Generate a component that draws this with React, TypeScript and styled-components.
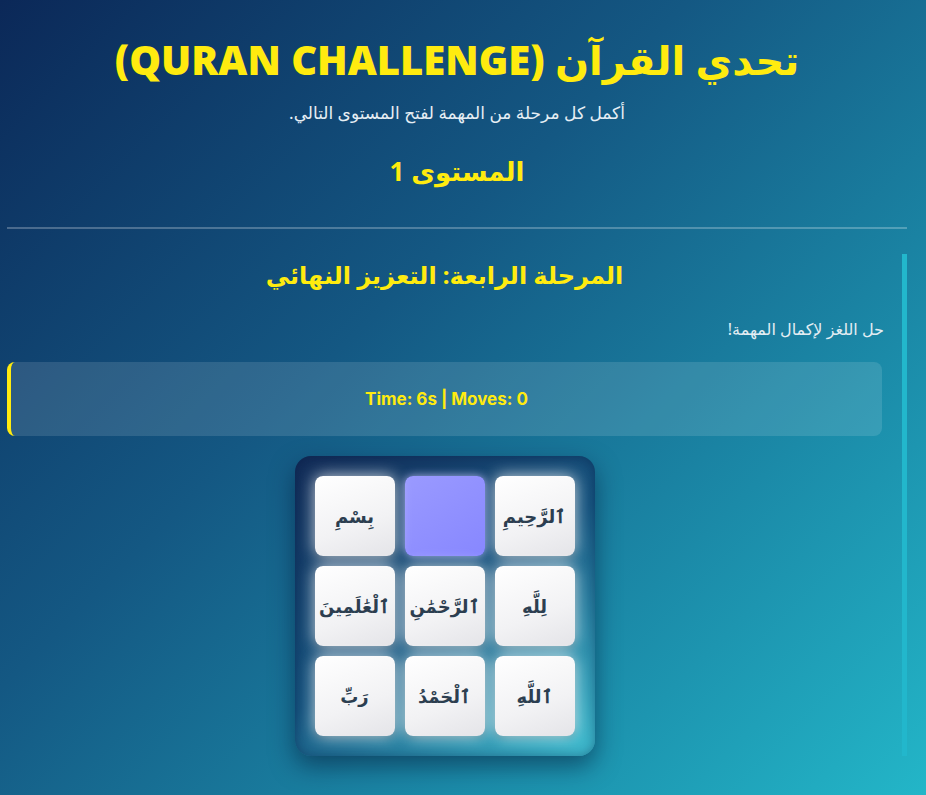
import React from "react";
import styled, { createGlobalStyle } from "styled-components";

const GlobalStyle = createGlobalStyle`
  html, body { margin: 0; padding: 0; }
  body {
    min-height: 100vh;
    background: linear-gradient(135deg, #0b2858 0%, #145883 40%, #1b8aa8 72%, #23b6c8 100%);
    font-family: "Noto Sans", "DejaVu Sans", sans-serif;
    color: #fff;
  }
`;

const Page = styled.div`
  direction: rtl;
  width: 900px;
  margin-left: 7px;
  min-height: 795px;
`;

const Header = styled.header`
  padding: 20px 0 40px;
  border-bottom: 2px solid rgba(255, 255, 255, 0.25);
  text-align: center;
`;

const Title = styled.h1`
  margin: 16px 0 17px;
  font-family: "Open Sans", "DejaVu Sans", sans-serif;
  font-weight: 800;
  font-size: 40px;
  line-height: 48px;
  color: #ffeb0f;
`;

const Subtitle = styled.p`
  margin: 0 0 30px;
  font-size: 17px;
  line-height: 24px;
  color: #e6eef4;
`;

const LevelTitle = styled.h2`
  margin: 0;
  font-size: 26px;
  line-height: 32px;
  font-weight: 700;
  color: #ffeb0f;
`;

const Stage = styled.section`
  margin-top: 25px;
  border-right: 5px solid #22b7cc;
  padding-right: 20px;
  display: flex;
  flex-direction: column;
  align-items: stretch;
`;

const StageTitle = styled.h3`
  margin: 3px 0 24px;
  text-align: center;
  font-size: 24px;
  line-height: 36px;
  font-weight: 700;
  color: #ffeb0f;
`;

const Instruction = styled.p`
  margin: 0 -2px 21px 0;
  font-size: 16px;
  line-height: 24px;
  color: #e3edf3;
`;

const Stats = styled.div`
  height: 74px;
  display: flex;
  align-items: center;
  justify-content: center;
  border-radius: 8px;
  border-left: 4px solid #ffeb0f;
  background: rgba(255, 255, 255, 0.12);
  font-family: "Inter", "Open Sans", sans-serif;
  font-weight: 700;
  font-size: 17px;
  color: #ffeb0f;
  direction: ltr;
  margin-bottom: 20px;
`;

const Board = styled.div`
  align-self: center;
  display: grid;
  grid-template-columns: repeat(3, 80px);
  grid-template-rows: repeat(3, 80px);
  gap: 10px;
  padding: 20px;
  border-radius: 16px;
  background: linear-gradient(145deg, #132c58 0%, #165580 50%, #3fbfd1 100%);
  box-shadow: 0 10px 25px rgba(4, 20, 50, 0.5), inset 0 0 12px rgba(0, 20, 60, 0.4);
`;

const Tile = styled.div<{ $empty?: boolean }>`
  display: flex;
  align-items: center;
  justify-content: center;
  border-radius: 8px;
  font-size: 18px;
  font-weight: 700;
  color: #2c3e50;
  background: ${(p) =>
    p.$empty
      ? "linear-gradient(145deg, #9a9aff, #8787ff)"
      : "linear-gradient(160deg, #ffffff 0%, #f2f2f4 60%, #e4e4e8 100%)"};
  box-shadow: ${(p) =>
    p.$empty
      ? "0 0 10px rgba(200, 200, 255, 0.85)"
      : "0 0 16px rgba(255, 255, 255, 0.8), 0 3px 5px rgba(0, 0, 0, 0.15)"};
`;

const tiles = [
  "ٱلرَّحِيمِ",
  "",
  "بِسْمِ",
  "لِلَّهِ",
  "ٱلرَّحْمَٰنِ",
  "ٱلْعَٰلَمِينَ",
  "ٱللَّهِ",
  "ٱلْحَمْدُ",
  "رَبِّ",
];

export default function App() {
  return (
    <>
      <GlobalStyle />
      <Page>
        <Header>
          <Title>تحدي القرآن (QURAN CHALLENGE)</Title>
          <Subtitle>أكمل كل مرحلة من المهمة لفتح المستوى التالي.</Subtitle>
          <LevelTitle>المستوى 1</LevelTitle>
        </Header>
        <Stage>
          <StageTitle>المرحلة الرابعة: التعزيز النهائي</StageTitle>
          <Instruction>حل اللغز لإكمال المهمة!</Instruction>
          <Stats>Time: 6s | Moves: 0</Stats>
          <Board>
            {tiles.map((t, i) => (
              <Tile key={i} $empty={t === ""}>
                {t}
              </Tile>
            ))}
          </Board>
        </Stage>
      </Page>
    </>
  );
}
